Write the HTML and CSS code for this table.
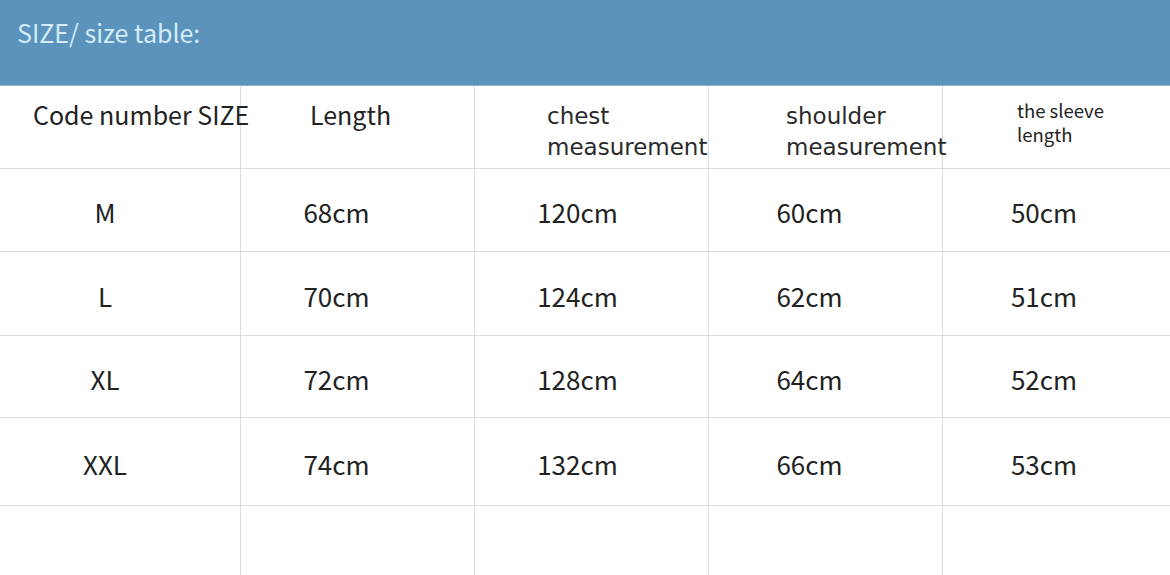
FILE: index.html
```html
<!DOCTYPE html>
<html lang="en">
<head>
<meta charset="utf-8">
<title>Size table</title>
<link rel="stylesheet" href="styles.css">
</head>
<body>
<div class="page">
  <header class="banner">
    <h1 class="banner-title">SIZE/ size table:</h1>
  </header>
  <div class="table">
    <div class="cell head c1"><span class="h-main">Code number SIZE</span></div>
    <div class="cell head c2"><span class="h-main">Length</span></div>
    <div class="cell head c3"><span class="h-wide">chest<br>measurement</span></div>
    <div class="cell head c4"><span class="h-wide">shoulder<br>measurement</span></div>
    <div class="cell head c5"><span class="h-small">the sleeve</span><span class="h-small">length</span></div>

    <div class="cell data c1">M</div>
    <div class="cell data c2">68cm</div>
    <div class="cell data c3">120cm</div>
    <div class="cell data c4">60cm</div>
    <div class="cell data c5">50cm</div>

    <div class="cell data c1">L</div>
    <div class="cell data c2">70cm</div>
    <div class="cell data c3">124cm</div>
    <div class="cell data c4">62cm</div>
    <div class="cell data c5">51cm</div>

    <div class="cell data c1">XL</div>
    <div class="cell data c2">72cm</div>
    <div class="cell data c3">128cm</div>
    <div class="cell data c4">64cm</div>
    <div class="cell data c5">52cm</div>

    <div class="cell data c1">XXL</div>
    <div class="cell data c2">74cm</div>
    <div class="cell data c3">132cm</div>
    <div class="cell data c4">66cm</div>
    <div class="cell data c5">53cm</div>

    <div class="cell empty"></div>
    <div class="cell empty"></div>
    <div class="cell empty"></div>
    <div class="cell empty"></div>
    <div class="cell empty"></div>
  </div>
</div>
</body>
</html>
```

FILE: styles.css
```css
* { box-sizing: border-box; }

html, body {
  margin: 0;
  padding: 0;
  background: #ffffff;
}

.page {
  width: 1170px;
  height: 575px;
  overflow: hidden;
  font-family: "Noto Sans CJK SC", "Noto Sans", sans-serif;
  color: #222222;
}

.banner {
  height: 86px;
  background: #5b93bd;
  padding: 14px 0 0 17px;
  border-bottom: 1px solid #8fb3cf;
}

.banner-title {
  margin: 0;
  font-weight: 400;
  font-size: 25px;
  line-height: 36px;
  color: #d3ecf8;
}

.table {
  display: grid;
  grid-template-columns: 241px 234px 234px 234px 1fr;
  grid-template-rows: 83px 83px 84px 82px 88px 70px;
}

.cell {
  border-right: 1px solid #dcdcdc;
  border-bottom: 1px solid #dcdcdc;
  min-width: 0;
}

.cell:nth-child(5n) { border-right: none; }
.empty { border-bottom: none; }

.head {
  padding-top: 12px;
  white-space: nowrap;
  overflow: visible;
}

.head.c1 { padding-left: 33px; }
.head.c2 { padding-left: 69px; }
.head.c3 { padding-left: 72px; padding-top: 15px; }
.head.c4 { padding-left: 77px; padding-top: 15px; }
.head.c5 {
  padding-left: 74px;
  padding-top: 12px;
  display: flex;
  flex-direction: column;
  gap: 0;
}

.h-main {
  font-size: 25px;
  line-height: 32px;
}

.h-wide {
  display: block;
  font-family: "DejaVu Sans", sans-serif;
  font-size: 23px;
  line-height: 31px;
  color: #2a2a2a;
}

.h-small {
  display: block;
  font-size: 18.5px;
  line-height: 24px;
  height: 24px;
}

.data {
  display: flex;
  align-items: center;
  justify-content: center;
  padding-top: 3px;
  font-size: 26px;
}

.data.c1 { padding-right: 30px; }
.data.c2 { padding-right: 42px; }
.data.c3 { padding-right: 28px; }
.data.c4 { padding-right: 32px; }
.data.c5 { padding-right: 25px; }
```
